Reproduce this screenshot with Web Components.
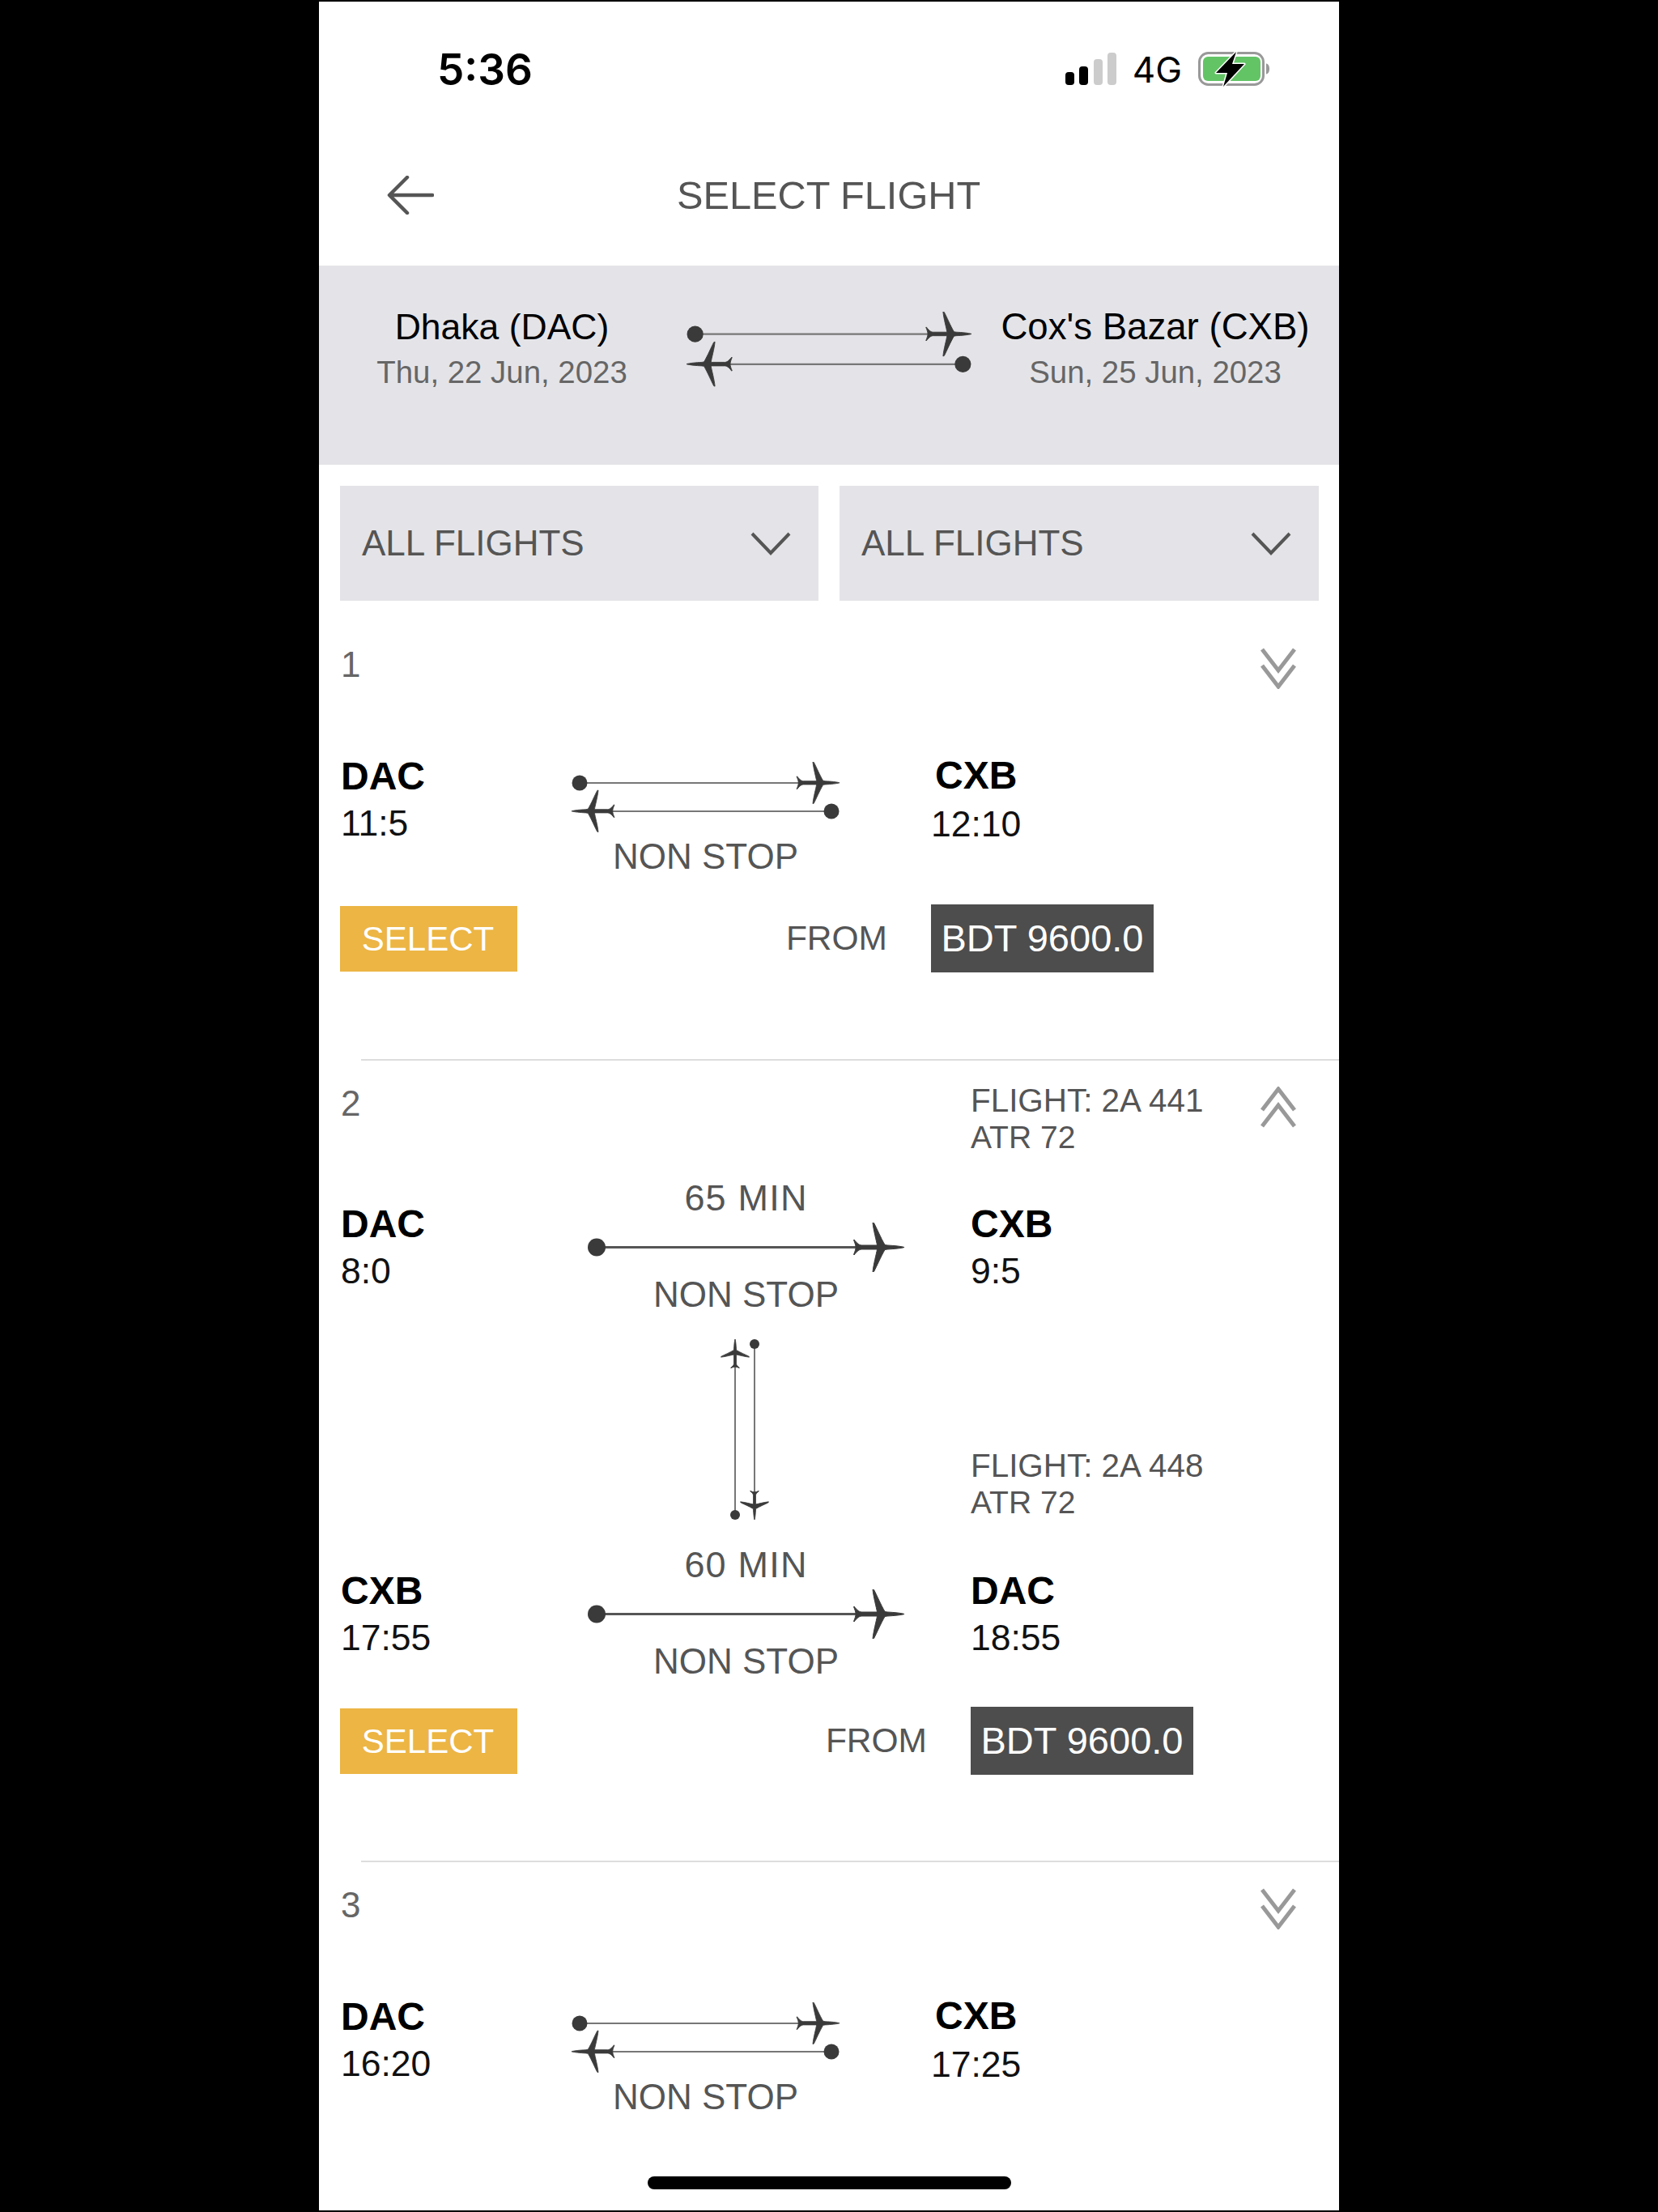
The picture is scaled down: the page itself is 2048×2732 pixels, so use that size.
<!DOCTYPE html>
<html>
<head>
<meta charset="utf-8">
<title>Select Flight</title>
<style>
  html, body { margin: 0; background: #000; }
  body { font-family: "Liberation Sans", Arial, sans-serif; }
  #phone {
    position: relative;
    width: 1260px;
    height: 2728px;
    margin: 2px 0 0 394px;
    background: #fff;
    overflow: hidden;
  }
</style>
</head>
<body>
<div id="phone">
  <status-bar></status-bar>
  <nav-header>SELECT FLIGHT</nav-header>
  <route-band></route-band>
  <filter-row>
    <filter-select>ALL FLIGHTS</filter-select>
    <filter-select>ALL FLIGHTS</filter-select>
  </filter-row>

  <flight-card index="1">
    <route-leg from="DAC" depart="11:5" to="CXB" arrive="12:10" type="round"></route-leg>
    <fare-footer price="BDT 9600.0" price-x="730"></fare-footer>
  </flight-card>

  <flight-card index="2" open>
    <flight-info slot="info" flight="FLIGHT: 2A 441" craft="ATR 72"></flight-info>
    <route-leg from="DAC" depart="8:0" to="CXB" arrive="9:5" type="single" duration="65 MIN"></route-leg>
    <leg-connector>
      <flight-info flight="FLIGHT: 2A 448" craft="ATR 72"></flight-info>
    </leg-connector>
    <route-leg from="CXB" depart="17:55" to="DAC" arrive="18:55" type="single" duration="60 MIN" flush></route-leg>
    <fare-footer price="BDT 9600.0" price-x="779" tall></fare-footer>
  </flight-card>

  <flight-card index="3" last>
    <route-leg from="DAC" depart="16:20" to="CXB" arrive="17:25" type="round"></route-leg>
  </flight-card>

  <home-indicator></home-indicator>
</div>

<script>
const PLANE = 'M65 30.5C61 29.2 52 28.4 44 28L41 27.5C36 19 31 7 27.5.5L26 0C27 10 30.5 22 31.5 28L12 28C9 27.5 7 26 3 21L2.5 21.5C4 25 5 28 5 30.5C5 33 4 36 2.5 39.5L3 40C7 35 9 33.5 12 33L31.5 33C30.5 39 27 51 26 61L27.5 60.5C31 54 36 42 41 33.5L44 33C52 32.6 61 31.8 65 30.5Z';

// two opposite flights, used in the band and in collapsed cards
function doubleRoute(width) {
  const h = width * 90 / 331;
  return `<svg width="${width}" height="${h}" viewBox="0 0 331 90" style="display:block">
    <line x1="10" y1="26" x2="285" y2="26" stroke="#777" stroke-width="2"/>
    <circle cx="10" cy="26" r="9.5" fill="#3a3a3a"/>
    <path d="${PLANE}" fill="#3a3a3a" stroke="#3a3a3a" stroke-width="1" transform="translate(276 0) scale(.846)"/>
    <line x1="46" y1="61" x2="321" y2="61" stroke="#777" stroke-width="2"/>
    <circle cx="321" cy="61" r="9.5" fill="#3a3a3a"/>
    <path d="${PLANE}" fill="#3a3a3a" stroke="#3a3a3a" stroke-width="1" transform="translate(55 35) scale(-.846 .846)"/>
  </svg>`;
}

class StatusBar extends HTMLElement {
  connectedCallback() {
    this.attachShadow({ mode: 'open' });
    this.shadowRoot.innerHTML = `
      <style>
        :host {
          display: flex;
          align-items: center;
          justify-content: space-between;
          height: 166px;
          padding: 0 84px 0 146px;
          font-family: Inter, "Liberation Sans", sans-serif;
          color: #000;
        }
        .time { font-size: 53px; font-weight: 600; padding-top: 2px; }
        .right { display: flex; align-items: center; }
        .net { font-size: 44px; font-weight: 400; margin: 0 20px 0 19px; padding-top: 2px; }
        svg { display: block; }
      </style>
      <span class="time">5:36</span>
      <div class="right">
        <svg width="64" height="40" viewBox="0 0 64 40">
          <rect x="0" y="24" width="11" height="16" rx="4" fill="#000"/>
          <rect x="17" y="17" width="11" height="23" rx="4" fill="#000"/>
          <rect x="35" y="8" width="11" height="32" rx="4" fill="#ccc"/>
          <rect x="52" y="0" width="11" height="40" rx="4" fill="#ccc"/>
        </svg>
        <span class="net">4G</span>
        <svg width="90" height="46" viewBox="0 0 90 46">
          <rect x="1.5" y="3.5" width="79" height="39" rx="11" fill="none" stroke="#999" stroke-width="3"/>
          <rect x="6" y="8" width="71" height="30" rx="6" fill="#63c466"/>
          <path d="M84 16.500C87 17 88 20 88 23C88 26 87 29 84 29.500Z" fill="#999"/>
          <path d="M47 2L22 28L36 28L31 45L57 17L42 17Z" fill="#000" stroke="#fff" stroke-width="3" stroke-linejoin="round" paint-order="stroke"/>
        </svg>
      </div>
    `;
  }
}
customElements.define('status-bar', StatusBar);

class NavHeader extends HTMLElement {
  connectedCallback() {
    this.attachShadow({ mode: 'open' });
    this.shadowRoot.innerHTML = `
      <style>
        :host {
          display: flex;
          align-items: center;
          height: 146px;
          padding: 0 0 14px 84px;
          color: #555;
        }
        svg { display: block; }
        .title { font-size: 48.700px; margin-left: 300px; line-height: 1; }
      </style>
      <svg width="58" height="48" viewBox="0 0 58 48">
        <path d="M56 24H4M25 2L3 24L25 46" fill="none" stroke="#555" stroke-width="4.500" stroke-linecap="round" stroke-linejoin="round"/>
      </svg>
      <span class="title"><slot></slot></span>
    `;
  }
}
customElements.define('nav-header', NavHeader);

class RouteBand extends HTMLElement {
  connectedCallback() {
    this.attachShadow({ mode: 'open' });
    this.shadowRoot.innerHTML = `
      <style>
        :host {
          display: grid;
          grid-template-columns: 452px 354px 454px;
          height: 196px;
          padding-top: 50px;
          background: #e4e4e8;
          text-align: center;
        }
        .city { font-size: 44.500px; line-height: 52px; color: #000; }
        .wide { font-size: 45.600px; }
        .date { font-size: 38.400px; line-height: 60px; color: #666; }
        .mid { padding: 7px 0 0 2px; }
      </style>
      <div>
        <div class="city">Dhaka (DAC)</div>
        <div class="date">Thu, 22 Jun, 2023</div>
      </div>
      <div class="mid">${doubleRoute(352)}</div>
      <div>
        <div class="city wide">Cox's Bazar (CXB)</div>
        <div class="date">Sun, 25 Jun, 2023</div>
      </div>
    `;
  }
}
customElements.define('route-band', RouteBand);

class FilterRow extends HTMLElement {
  connectedCallback() {
    this.attachShadow({ mode: 'open' });
    this.shadowRoot.innerHTML = `
      <style>
        :host {
          display: grid;
          grid-template-columns: 591px 592px;
          gap: 26px;
          padding: 26px 25px 26px 26px;
        }
      </style>
      <slot></slot>
    `;
  }
}
customElements.define('filter-row', FilterRow);

class FilterSelect extends HTMLElement {
  connectedCallback() {
    this.attachShadow({ mode: 'open' });
    this.shadowRoot.innerHTML = `
      <style>
        :host {
          display: flex;
          align-items: center;
          justify-content: space-between;
          height: 142px;
          padding: 0 34px 0 27px;
          background: #e4e4e8;
          color: #555;
          font-size: 44px;
        }
        svg { display: block; }
      </style>
      <span><slot></slot></span>
      <svg width="50" height="30" viewBox="0 0 50 30">
        <path d="M2 3L25 27L48 3" fill="none" stroke="#555" stroke-width="4"/>
      </svg>
    `;
  }
}
customElements.define('filter-select', FilterSelect);

class FlightCard extends HTMLElement {
  connectedCallback() {
    const open = this.hasAttribute('open');
    this.attachShadow({ mode: 'open' });
    this.shadowRoot.innerHTML = `
      <style>
        :host { display: block; }
        .body { padding: 27px 52px 0 27px; }
        .head {
          display: grid;
          grid-template-columns: 778px 1fr 46px;
          min-height: 56px;
          align-items: start;
        }
        .index { font-size: 44px; line-height: 52px; color: #666; }
        .toggle { display: block; margin-top: 5px; }
        .rule { height: 2px; margin-left: 52px; background: #ddd; }
      </style>
      <div class="body">
        <div class="head">
          <div class="index">${this.getAttribute('index')}</div>
          <slot name="info"><span></span></slot>
          <svg class="toggle" width="46" height="51" viewBox="0 0 46 51" ${open ? 'style="transform:scaleY(-1)"' : ''}>
            <path d="M3 2L23 28L43 2M3 22L23 48L43 22" fill="none" stroke="#999" stroke-width="5"/>
          </svg>
        </div>
        <slot></slot>
      </div>
      ${this.hasAttribute('last') ? '' : '<div class="rule"></div>'}
    `;
  }
}
customElements.define('flight-card', FlightCard);

class FlightInfo extends HTMLElement {
  connectedCallback() {
    this.attachShadow({ mode: 'open' });
    this.shadowRoot.innerHTML = `
      <style>
        :host { display: block; font-size: 39px; line-height: 45px; color: #555; }
        .num { font-size: 40.400px; }
      </style>
      <div class="num">${this.getAttribute('flight')}</div>
      <div>${this.getAttribute('craft')}</div>
    `;
  }
}
customElements.define('flight-info', FlightInfo);

class RouteLeg extends HTMLElement {
  connectedCallback() {
    const round = this.getAttribute('type') === 'round';
    const mid = round
      ? `<div class="graphic">${doubleRoute(331)}</div><div class="label">NON STOP</div>`
      : `<div class="label dur">${this.getAttribute('duration')}</div>
         <svg class="line" width="391" height="61" viewBox="0 0 391 61">
           <line x1="11" y1="30.500" x2="335" y2="30.500" stroke="#555" stroke-width="3"/>
           <circle cx="11" cy="30.500" r="11" fill="#3a3a3a"/>
           <path d="${PLANE}" fill="#3a3a3a" stroke="#3a3a3a" stroke-width="1" transform="translate(326 0)"/>
         </svg>
         <div class="label">NON STOP</div>`;
    this.attachShadow({ mode: 'open' });
    this.shadowRoot.innerHTML = `
      <style>
        :host {
          display: grid;
          align-items: start;
          color: #000;
        }
        :host([type="round"]) {
          grid-template-columns: 285px 331px auto;
          justify-content: start;
          margin-top: 78px;
        }
        :host([type="single"]) {
          grid-template-columns: 305px 391px auto;
          margin-top: 26px;
        }
        :host([flush]) { margin-top: 0; }
        .name { font-size: 48px; font-weight: 700; line-height: 59px; }
        .clock { font-size: 44.500px; line-height: 58px; color: #111; }
        :host([type="single"]) .end { padding: 29px 0 0 82px; }
        :host([type="single"]) .start { padding-top: 29px; }
        :host([type="round"]) .end { margin-left: 113px; text-align: center; }
        :host([type="round"]) .end .name { margin-top: -1px; }
        :host([type="round"]) .end .clock { margin-top: 2px; }
        .graphic { padding-top: 12px; }
        .label { font-size: 44px; line-height: 54px; color: #555; text-align: center; }
        .dur { font-size: 45px; letter-spacing: 1.2px; }
        .line { display: block; margin: 3px 0 1px; }
      </style>
      <div class="start">
        <div class="name">${this.getAttribute('from')}</div>
        <div class="clock">${this.getAttribute('depart')}</div>
      </div>
      <div class="mid">${mid}</div>
      <div class="end">
        <div class="name">${this.getAttribute('to')}</div>
        <div class="clock">${this.getAttribute('arrive')}</div>
      </div>
    `;
  }
}
customElements.define('route-leg', RouteLeg);

class LegConnector extends HTMLElement {
  connectedCallback() {
    this.attachShadow({ mode: 'open' });
    this.shadowRoot.innerHTML = `
      <style>
        :host {
          display: grid;
          grid-template-columns: 305px 391px auto;
          height: 280px;
        }
        svg { display: block; margin: 28px 0 0 164px; }
        .info { padding: 0 0 28px 82px; align-self: end; }
      </style>
      <div></div>
      <svg width="60" height="223" viewBox="0 0 60 223">
        <line x1="18" y1="30" x2="18" y2="212" stroke="#777" stroke-width="2"/>
        <circle cx="18" cy="217" r="6" fill="#3a3a3a"/>
        <path d="${PLANE}" fill="#3a3a3a" stroke="#3a3a3a" stroke-width="1.500" transform="translate(18 37) rotate(-90) scale(.57) translate(0 -30.500)"/>
        <line x1="42" y1="8" x2="42" y2="192" stroke="#777" stroke-width="2"/>
        <circle cx="42" cy="6" r="6" fill="#3a3a3a"/>
        <path d="${PLANE}" fill="#3a3a3a" stroke="#3a3a3a" stroke-width="1.500" transform="translate(42 186) rotate(90) scale(.57) translate(0 -30.500)"/>
      </svg>
      <div class="info"><slot></slot></div>
    `;
  }
}
customElements.define('leg-connector', LegConnector);

class FareFooter extends HTMLElement {
  connectedCallback() {
    this.attachShadow({ mode: 'open' });
    this.shadowRoot.innerHTML = `
      <style>
        :host {
          display: grid;
          grid-template-columns: 219px ${this.getAttribute('price-x') - 219}px 275px;
          align-items: center;
          margin-top: 32px;
          margin-left: -1px;
          padding-bottom: 107px;
        }
        :host([tall]) { margin-top: 29px; padding-bottom: 106px; }
        .select {
          height: 81px;
          line-height: 81px;
          background: #ecb544;
          color: #fff;
          font-size: 42px;
          text-align: center;
          text-indent: -2px;
        }
        .from { font-size: 42.500px; color: #555; text-align: right; padding-right: 54px; }
        .price {
          height: 84px;
          line-height: 84px;
          background: #4d4d4d;
          color: #fff;
          font-size: 47px;
          text-align: center;
        }
      </style>
      <div class="select">SELECT</div>
      <div class="from">FROM</div>
      <div class="price">${this.getAttribute('price')}</div>
    `;
  }
}
customElements.define('fare-footer', FareFooter);

class HomeIndicator extends HTMLElement {
  connectedCallback() {
    this.attachShadow({ mode: 'open' });
    this.shadowRoot.innerHTML = `
      <style>
        :host {
          position: absolute;
          left: 406px;
          bottom: 26px;
          width: 449px;
          height: 16px;
          border-radius: 8px;
          background: #000;
        }
      </style>
    `;
  }
}
customElements.define('home-indicator', HomeIndicator);
</script>
</body>
</html>
